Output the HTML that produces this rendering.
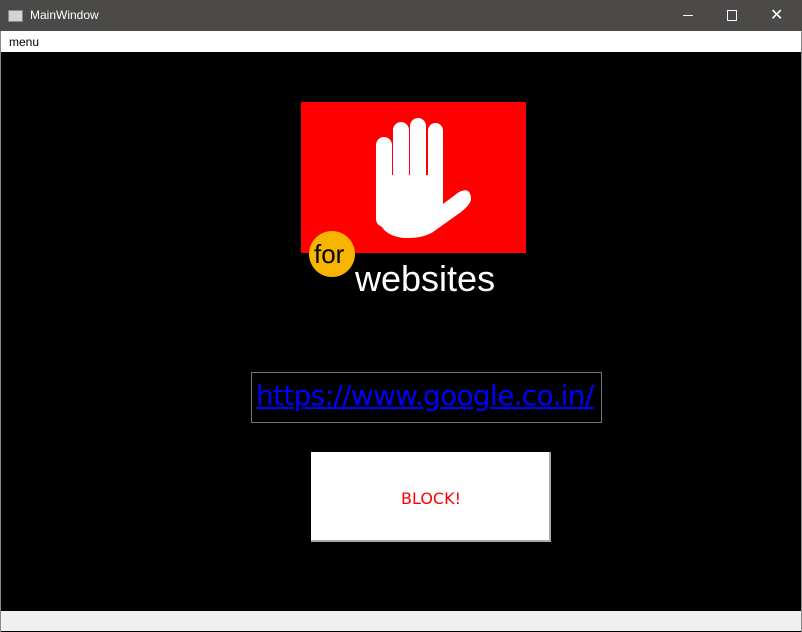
<!DOCTYPE html>
<html><head><style>
body{margin:0;width:802px;height:632px;overflow:hidden;background:#000;font-family:"Liberation Sans",sans-serif;position:relative}
.tb{position:absolute;left:0;top:0;width:802px;height:31px;background:#4b4a48;color:#fff;font-size:12px}
.mb{position:absolute;left:1px;top:31px;width:800px;height:21px;background:#fff;font-size:12px}
.sb{position:absolute;left:1px;top:611px;width:800px;height:20px;background:#f0f0f0}
.a{position:absolute}
</style></head><body>
<div class="tb">
<div class="a" style="left:8px;top:10px;width:13px;height:10px;background:#cfd6d8;border:1px solid #888"></div>
<div class="a" style="left:30px;top:8px">MainWindow</div>
<div class="a" style="left:683px;top:15px;width:10px;height:1px;background:#fff"></div>
<div class="a" style="left:727px;top:10px;width:8px;height:9px;border:1px solid #fff"></div>
<div class="a" style="left:770px;top:5px;font-size:16px">✕</div>
</div>
<div class="mb"><span class="a" style="left:8px;top:4px">menu</span></div>
<div class="a" style="left:301px;top:102px;width:225px;height:151px;background:#f00"></div>
<svg class="a" style="left:301px;top:102px" width="225" height="151">
<g fill="#fff">
<rect x="75" y="35" width="16" height="90" rx="8"/>
<rect x="92" y="20" width="16" height="90" rx="8"/>
<rect x="109" y="16" width="16" height="90" rx="8"/>
<rect x="127" y="21" width="15" height="90" rx="7.5"/>
<path d="M76 73 L142 73 L142 102 L158 90 Q170 84 170 98 Q168 104 160 110 L132 130 Q122 136 108 136 L103 136 Q77 134 76 108 Z"/>
</g></svg>
<div class="a" style="left:309px;top:231px;width:46px;height:46px;border-radius:50%;background:#f7b500"></div>
<div class="a" style="left:314px;top:239px;font-size:26px;color:#000">for</div>
<div class="a" style="left:355px;top:258px;font-size:36px;color:#fff">websites</div>
<div class="a" style="left:251px;top:372px;width:349px;height:49px;border:1px solid #777"></div>
<div class="a" style="left:256px;top:379px;font-size:28px;color:#00f;text-decoration:underline;font-family:'DejaVu Sans',sans-serif;letter-spacing:-0.7px">https://www.google.co.in/</div>
<div class="a" style="left:311px;top:452px;width:238px;height:88px;background:#fff;border-right:2px solid #aaa;border-bottom:2px solid #aaa"></div>
<div class="a" style="left:311px;top:489px;width:240px;text-align:center;font-size:16px;color:#f00;font-family:'DejaVu Sans',sans-serif">BLOCK!</div>
<div class="sb"></div>
<div class="a" style="left:0;top:31px;width:1px;height:601px;background:#888"></div>
<div class="a" style="left:801px;top:31px;width:1px;height:601px;background:#888"></div>
</body></html>
